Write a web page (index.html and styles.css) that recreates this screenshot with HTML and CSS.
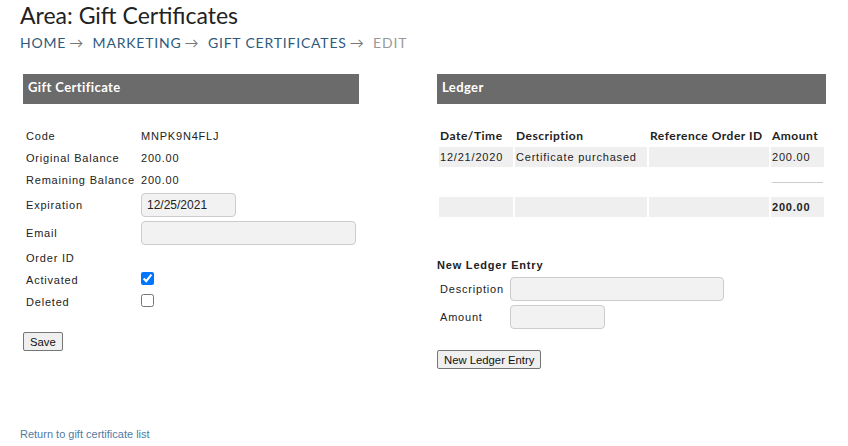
FILE: index.html
```html
<!DOCTYPE html>
<html lang="en">
<head>
    <meta charset="UTF-8">
    <title>Area: Gift Certificates</title>
    <link rel="stylesheet" href="styles.css">
</head>
<body>
    <h1 class="page-title">Area: Gift Certificates</h1>
    <div class="breadcrumb">
        <a href="#">Home</a><span class="arrow">&rarr;</span>
        <a href="#">Marketing</a><span class="arrow">&rarr;</span>
        <a href="#">Gift Certificates</a><span class="arrow">&rarr;</span>
        <span class="current">Edit</span>
    </div>

    <div class="main">
        <div class="panel panel-left">
            <div class="panel-header">Gift Certificate</div>
            <table class="form-table">
                <tr><td class="label">Code</td><td>MNPK9N4FLJ</td></tr>
                <tr><td class="label">Original Balance</td><td>200.00</td></tr>
                <tr><td class="label">Remaining Balance</td><td>200.00</td></tr>
                <tr><td class="label">Expiration</td><td><input type="text" class="input-short" value="12/25/2021"></td></tr>
                <tr><td class="label">Email</td><td><input type="text" class="input-long"></td></tr>
                <tr><td class="label">Order ID</td><td></td></tr>
                <tr><td class="label">Activated</td><td><input type="checkbox" checked></td></tr>
                <tr><td class="label">Deleted</td><td><input type="checkbox"></td></tr>
            </table>
            <button class="btn">Save</button>
        </div>

        <div class="panel panel-right">
            <div class="panel-header">Ledger</div>
            <table class="ledger">
                <tr>
                    <th class="col-date">Date/Time</th>
                    <th class="col-desc">Description</th>
                    <th class="col-ref">Reference Order ID</th>
                    <th class="col-amt">Amount</th>
                </tr>
                <tr class="shaded">
                    <td>12/21/2020</td>
                    <td>Certificate purchased</td>
                    <td></td>
                    <td>200.00</td>
                </tr>
                <tr class="rule-row">
                    <td></td><td></td><td></td>
                    <td><div class="rule"></div></td>
                </tr>
                <tr class="shaded total">
                    <td></td><td></td><td></td>
                    <td>200.00</td>
                </tr>
            </table>

            <div class="sub-title">New Ledger Entry</div>
            <table class="form-table entry-table">
                <tr><td class="label">Description</td><td><input type="text" class="input-desc"></td></tr>
                <tr><td class="label">Amount</td><td><input type="text" class="input-short"></td></tr>
            </table>
            <button class="btn btn-entry">New Ledger Entry</button>
        </div>
    </div>

    <a href="#" class="return-link">Return to gift certificate list</a>
</body>
</html>
```

FILE: styles.css
```css
* {
    margin: 0;
    padding: 0;
    box-sizing: border-box;
}

body {
    padding: 0 20px;
    font-family: "Liberation Sans", Arial, sans-serif;
    font-size: 11px;
    color: #222;
    background: #fff;
}

.page-title {
    font-family: Lato, sans-serif;
    font-size: 23px;
    font-weight: normal;
    line-height: 30px;
    color: #222;
}

.breadcrumb {
    margin-top: 3px;
    font-family: Lato, sans-serif;
    font-size: 14px;
    line-height: 20px;
    letter-spacing: 0.8px;
    text-transform: uppercase;
}

.breadcrumb a {
    color: #2e5a7c;
    text-decoration: none;
}

.breadcrumb .arrow {
    color: #777;
    margin: 0 5px 0 3px;
    letter-spacing: 0;
}

.breadcrumb .current {
    color: #999;
}

.main {
    display: flex;
    gap: 78px;
    margin-top: 21px;
    margin-left: 3px;
}

.panel-left {
    width: 336px;
}

.panel-right {
    width: 389px;
}

.panel-header {
    height: 30px;
    padding-left: 5px;
    background: #6b6b6b;
    color: #fff;
    font-family: Lato, sans-serif;
    font-weight: bold;
    font-size: 13px;
    letter-spacing: 0.4px;
    line-height: 26px;
}

.form-table {
    border-collapse: collapse;
    margin-top: 21px;
    letter-spacing: 0.8px;
}

.form-table td {
    padding: 2px 3px;
    line-height: 18px;
    vertical-align: middle;
    white-space: nowrap;
}

.form-table td.label {
    width: 115px;
}

.form-table input[type="text"] {
    display: block;
    height: 24px;
    padding: 0 5px;
    border: 1px solid #ccc;
    border-radius: 4px;
    background: #f2f2f2;
    font-family: "Liberation Sans", Arial, sans-serif;
    font-size: 12px;
    color: #222;
}

.form-table input[type="checkbox"] {
    display: block;
    width: 13px;
    height: 13px;
    margin: 0 0 4px 0;
}

.input-short {
    width: 95px;
}

.input-long {
    width: 215px;
}

.input-desc {
    width: 214px;
}

.btn {
    display: block;
    height: 19px;
    padding: 0 6px;
    border: 1px solid #767676;
    border-radius: 2px;
    background: #efefef;
    font-family: "Liberation Sans", Arial, sans-serif;
    font-size: 11.3px;
    color: #111;
}

.panel-left .btn {
    margin-top: 19px;
}

.ledger {
    width: 100%;
    margin-top: 19px;
    border-spacing: 2px;
    table-layout: fixed;
    letter-spacing: 0.8px;
}

.ledger th,
.ledger td {
    height: 20px;
    padding: 0 1px;
    text-align: left;
    white-space: nowrap;
    overflow: hidden;
}

.ledger th {
    font-family: Lato, sans-serif;
    font-size: 12px;
    font-weight: bold;
    letter-spacing: 0.5px;
}

.col-date { width: 74px; }
.col-desc { width: 132px; }
.col-ref { width: 120px; }
.col-amt { width: 53px; }

.ledger tr.shaded td {
    background: #efefef;
}

.ledger tr.total td {
    font-weight: bold;
}

.ledger tr.rule-row td {
    height: 26px;
    padding: 0;
}

.rule {
    margin: 0 1px;
    border-top: 1px solid #ccc;
}

.sub-title {
    margin-top: 37px;
    font-weight: bold;
    line-height: 18px;
    letter-spacing: 0.8px;
}

.entry-table {
    margin-top: 1px;
}

.entry-table td.label {
    width: 70px;
}

.btn-entry {
    margin-top: 19px;
}

.return-link {
    display: block;
    margin-top: 56px;
    line-height: 18px;
    color: #4f7ba3;
    text-decoration: none;
}
```
